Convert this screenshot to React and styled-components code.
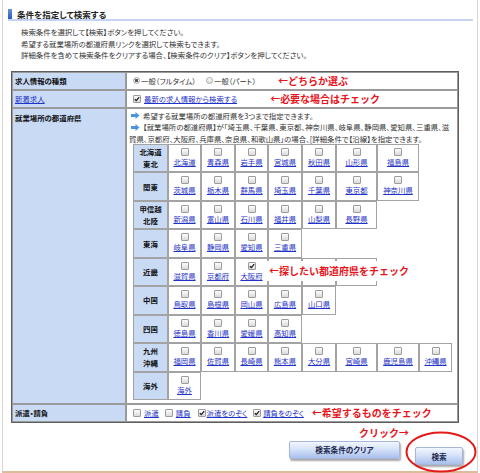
import React from 'react'
import styled, { createGlobalStyle } from 'styled-components'

const GlobalStyle = createGlobalStyle`
  html, body {
    margin: 0;
    padding: 0;
    background: #fff;
  }
  body {
    font-family: "Noto Sans CJK JP", "Noto Sans", sans-serif;
    font-feature-settings: "palt";
    color: #222;
  }
`;

const Page = styled.div`
  position: relative;
  box-sizing: border-box;
  width: 476px;
  height: 473px;
  margin-left: 2px;
  padding-top: 9px;
  border-left: 1px solid #d6d6d6;
  border-right: 1px solid #d6d6d6;
  border-bottom: 2px solid #dcbc98;
`;

const Heading = styled.div`
  display: flex;
  align-items: center;
  gap: 5px;
  height: 10px;
  margin: 0 4px 0 5px;
  border-bottom: 2px solid #c5d5f5;
`;

const Marker = styled.span`
  width: 4px;
  height: 10px;
  background: linear-gradient(#6a93dc, #2c5cb8);
`;

const Title = styled.h2`
  margin: 0;
  font-size: 8.5px;
  line-height: 10px;
  font-weight: bold;
  color: #222;
`;

const Intro = styled.p`
  margin: 5px 0 0 18px;
  font-size: 7.4px;
  line-height: 11.5px;
  color: #333;
`;

const SearchTable = styled.div`
  display: grid;
  grid-template-columns: 114px 332px;
  box-sizing: border-box;
  width: 448px;
  margin: 10px 0 0 8px;
  border: 1px solid #5e5e5e;
`;

const LabelCell = styled.div`
  box-sizing: border-box;
  min-height: 18px;
  display: flex;
  align-items: ${p => (p.$top ? 'flex-start' : 'center')};
  padding: ${p => (p.$top ? '3px' : '0')} 2px 0;
  background: #c8daf4;
  border: 1px solid #9a9a9a;
  font-size: 7.4px;
  line-height: 11px;
  font-weight: bold;
  color: #111;
`;

const ValueCell = styled.div`
  box-sizing: border-box;
  min-height: 18px;
  display: flex;
  align-items: center;
  padding: 0 6px;
  border: 1px solid #9a9a9a;
  font-size: 7.4px;
  line-height: 11px;
  color: #333;
`;

const AreaCell = styled.div`
  box-sizing: border-box;
  padding: 1px 2px 3px;
  border: 1px solid #9a9a9a;
  font-size: 7.4px;
  line-height: 11.5px;
  color: #333;
`;

const InfoLine = styled.div`
  white-space: nowrap;
`;

const Link = styled.a`
  color: #1f33c6;
  text-decoration: underline;
  cursor: pointer;
`;

const LabelLink = styled(Link)`
  font-weight: normal;
`;

const Option = styled.label`
  display: inline-flex;
  align-items: center;
  gap: ${p => (p.$gap != null ? p.$gap : 2)}px;
  margin-left: ${p => p.$space || 0}px;
  white-space: nowrap;
`;

const Radio = styled.span`
  box-sizing: border-box;
  width: 7px;
  height: 7px;
  border-radius: 50%;
  border: 1px solid #a9a9a9;
  background: ${p =>
    p.$checked
      ? 'radial-gradient(circle, #555 0 1.4px, #eee 1.9px)'
      : 'linear-gradient(#fbfbfb, #dedede)'};
`;

const Box = styled.span`
  display: inline-flex;
  box-sizing: border-box;
  width: 8px;
  height: 8px;
  border: 1px solid #9c9c9c;
  border-radius: 1px;
  background: linear-gradient(#fcfcfc, #dadada);
  flex-shrink: 0;
`;

const Check = ({ checked }) => (
  <Box>
    {checked && (
      <svg width="6" height="6" viewBox="0 0 6 6">
        <path d="M0.8 3.2 L2.3 4.6 L5.2 1.2" fill="none" stroke="#222" strokeWidth="1.3" />
      </svg>
    )}
  </Box>
);

const Note = styled.span`
  margin-left: ${p => p.$space || 0}px;
  color: #e8141c;
  font-size: 10px;
  line-height: 12px;
  font-weight: bold;
  font-feature-settings: normal;
  white-space: nowrap;
`;

const Arrow = () => (
  <svg width="9" height="7" viewBox="0 0 9 7" style={{ margin: '0 3px 0 2px', verticalAlign: '-0.5px' }}>
    <polygon points="0,2 4.5,2 4.5,0 8.5,3.5 4.5,7 4.5,5 0,5" fill="#4c93e4" />
  </svg>
);

const PrefGrid = styled.div`
  display: grid;
  grid-template-columns: 35px 33px 34px 33px 34px 34px 41px 42px 33px;
  grid-auto-rows: 28.45px;
  margin: 0 0 0 4px;
`;

const RegionHead = styled.div`
  grid-column: 1;
  box-sizing: border-box;
  display: flex;
  align-items: center;
  justify-content: center;
  text-align: center;
  background: #c8daf4;
  border: 1px solid #a3a3a3;
  font-size: 7.4px;
  line-height: 12px;
  font-weight: bold;
  color: #111;
`;

const PrefCell = styled.div`
  position: relative;
  box-sizing: border-box;
  display: flex;
  flex-direction: column;
  align-items: center;
  gap: 1px;
  padding-top: 3px;
  border: 1px solid #a3a3a3;
  font-size: 7.4px;
  line-height: 10px;
  white-space: nowrap;
`;

const CellNote = styled(Note)`
  position: absolute;
  left: 100%;
  top: 2px;
  z-index: 1;
  height: 20px;
  display: flex;
  align-items: center;
  padding: 0 3px 0 2px;
  background: #fff;
`;

const Footer = styled.div`
  display: flex;
  flex-direction: column;
  align-items: flex-end;
  margin: 4px 14px 0 0;
`;

const ClickNote = styled(Note)`
  margin-right: 54px;
`;

const ButtonRow = styled.div`
  display: flex;
  gap: 15px;
  margin-top: 2px;
`;

const ButtonSlot = styled.div`
  position: relative;
`;

const Button = styled.button`
  box-sizing: border-box;
  width: ${p => p.$w}px;
  height: 18px;
  padding: 0;
  border: 1px solid #a6b6dc;
  border-radius: 2px;
  background: linear-gradient(#f3f7ff 0%, #d6e2f8 45%, #a9c0ec 100%);
  box-shadow: 1px 2px 2px rgba(0, 0, 0, 0.35);
  font-family: inherit;
  font-feature-settings: "palt";
  font-size: 7.6px;
  font-weight: bold;
  color: #1d2a4e;
  cursor: pointer;
`;

const Ring = styled.svg`
  position: absolute;
  left: -10px;
  top: -10px;
  pointer-events: none;
`;

// cells hidden under the annotation are drawn empty
const regions = [
  { name: ['北海道', '東北'], prefs: ['北海道', '青森県', '岩手県', '宮城県', '秋田県', '山形県', '福島県'] },
  { name: ['関東'], prefs: ['茨城県', '栃木県', '群馬県', '埼玉県', '千葉県', '東京都', '神奈川県'] },
  { name: ['甲信越', '北陸'], prefs: ['新潟県', '富山県', '石川県', '福井県', '山梨県', '長野県'] },
  { name: ['東海'], prefs: ['岐阜県', '静岡県', '愛知県', '三重県'] },
  { name: ['近畿'], prefs: ['滋賀県', '京都府', '大阪府', '', '', ''] },
  { name: ['中国'], prefs: ['鳥取県', '島根県', '岡山県', '広島県', '山口県'] },
  { name: ['四国'], prefs: ['徳島県', '香川県', '愛媛県', '高知県'] },
  { name: ['九州', '沖縄'], prefs: ['福岡県', '佐賀県', '長崎県', '熊本県', '大分県', '宮崎県', '鹿児島県', '沖縄県'] },
  { name: ['海外'], prefs: ['海外'] },
];

export default function App() {
  return (
    <Page>
      <GlobalStyle />
      <Heading>
        <Marker />
        <Title>条件を指定して検索する</Title>
      </Heading>

      <Intro>
        検索条件を選択して【検索】ボタンを押してください。<br />
        希望する就業場所の都道府県リンクを選択して検索もできます。<br />
        詳細条件を含めて検索条件をクリアする場合、【検索条件のクリア】ボタンを押してください。
      </Intro>

      <SearchTable>
        <LabelCell>求人情報の種類</LabelCell>
        <ValueCell>
          <Option $gap={1}><Radio $checked />一般（フルタイム）</Option>
          <Option $gap={1} $space={10}><Radio />一般（パート）</Option>
          <Note $space={22}>←どちらか選ぶ</Note>
        </ValueCell>

        <LabelCell><LabelLink>新着求人</LabelLink></LabelCell>
        <ValueCell>
          <Option $gap={3}><Check checked /><Link>最新の求人情報から検索する</Link></Option>
          <Note $space={33}>←必要な場合はチェック</Note>
        </ValueCell>

        <LabelCell $top>就業場所の都道府県</LabelCell>
        <AreaCell>
          <InfoLine><Arrow />希望する就業場所の都道府県を3つまで指定できます。</InfoLine>
          <InfoLine><Arrow />【就業場所の都道府県】が「埼玉県、千葉県、東京都、神奈川県、岐阜県、静岡県、愛知県、三重県、滋</InfoLine>
          <InfoLine>賀県、京都府、大阪府、兵庫県、奈良県、和歌山県」の場合、[詳細条件で【沿線】を指定できます。</InfoLine>
          <PrefGrid>
            {regions.map(region => (
              <React.Fragment key={region.name.join('')}>
                <RegionHead>
                  <div>{region.name.map((line, i) => <div key={i}>{line}</div>)}</div>
                </RegionHead>
                {region.prefs.map((pref, i) => (
                  <PrefCell key={i}>
                    {pref && <Check checked={pref === '大阪府'} />}
                    {pref && <Link>{pref}</Link>}
                    {pref === '大阪府' && <CellNote>←探したい都道府県をチェック</CellNote>}
                  </PrefCell>
                ))}
              </React.Fragment>
            ))}
          </PrefGrid>
        </AreaCell>

        <LabelCell>派遣・請負</LabelCell>
        <ValueCell>
          <Option $gap={3}><Check /><Link>派遣</Link></Option>
          <Option $gap={3} $space={6}><Check /><Link>請負</Link></Option>
          <Option $gap={1} $space={7}><Check checked /><Link>派遣をのぞく</Link></Option>
          <Option $gap={2} $space={6}><Check checked /><Link>請負をのぞく</Link></Option>
          <Note $space={8}>←希望するものをチェック</Note>
        </ValueCell>
      </SearchTable>

      <Footer>
        <ClickNote>クリック→</ClickNote>
        <ButtonRow>
          <Button $w={111}>検索条件のクリア</Button>
          <ButtonSlot>
            <Button $w={48}>検索</Button>
            <Ring width="72" height="42" viewBox="0 0 72 42">
              <ellipse cx="36" cy="21" rx="34.5" ry="19.5" fill="none" stroke="#e21a1a" strokeWidth="2" />
            </Ring>
          </ButtonSlot>
        </ButtonRow>
      </Footer>
    </Page>
  )
}
